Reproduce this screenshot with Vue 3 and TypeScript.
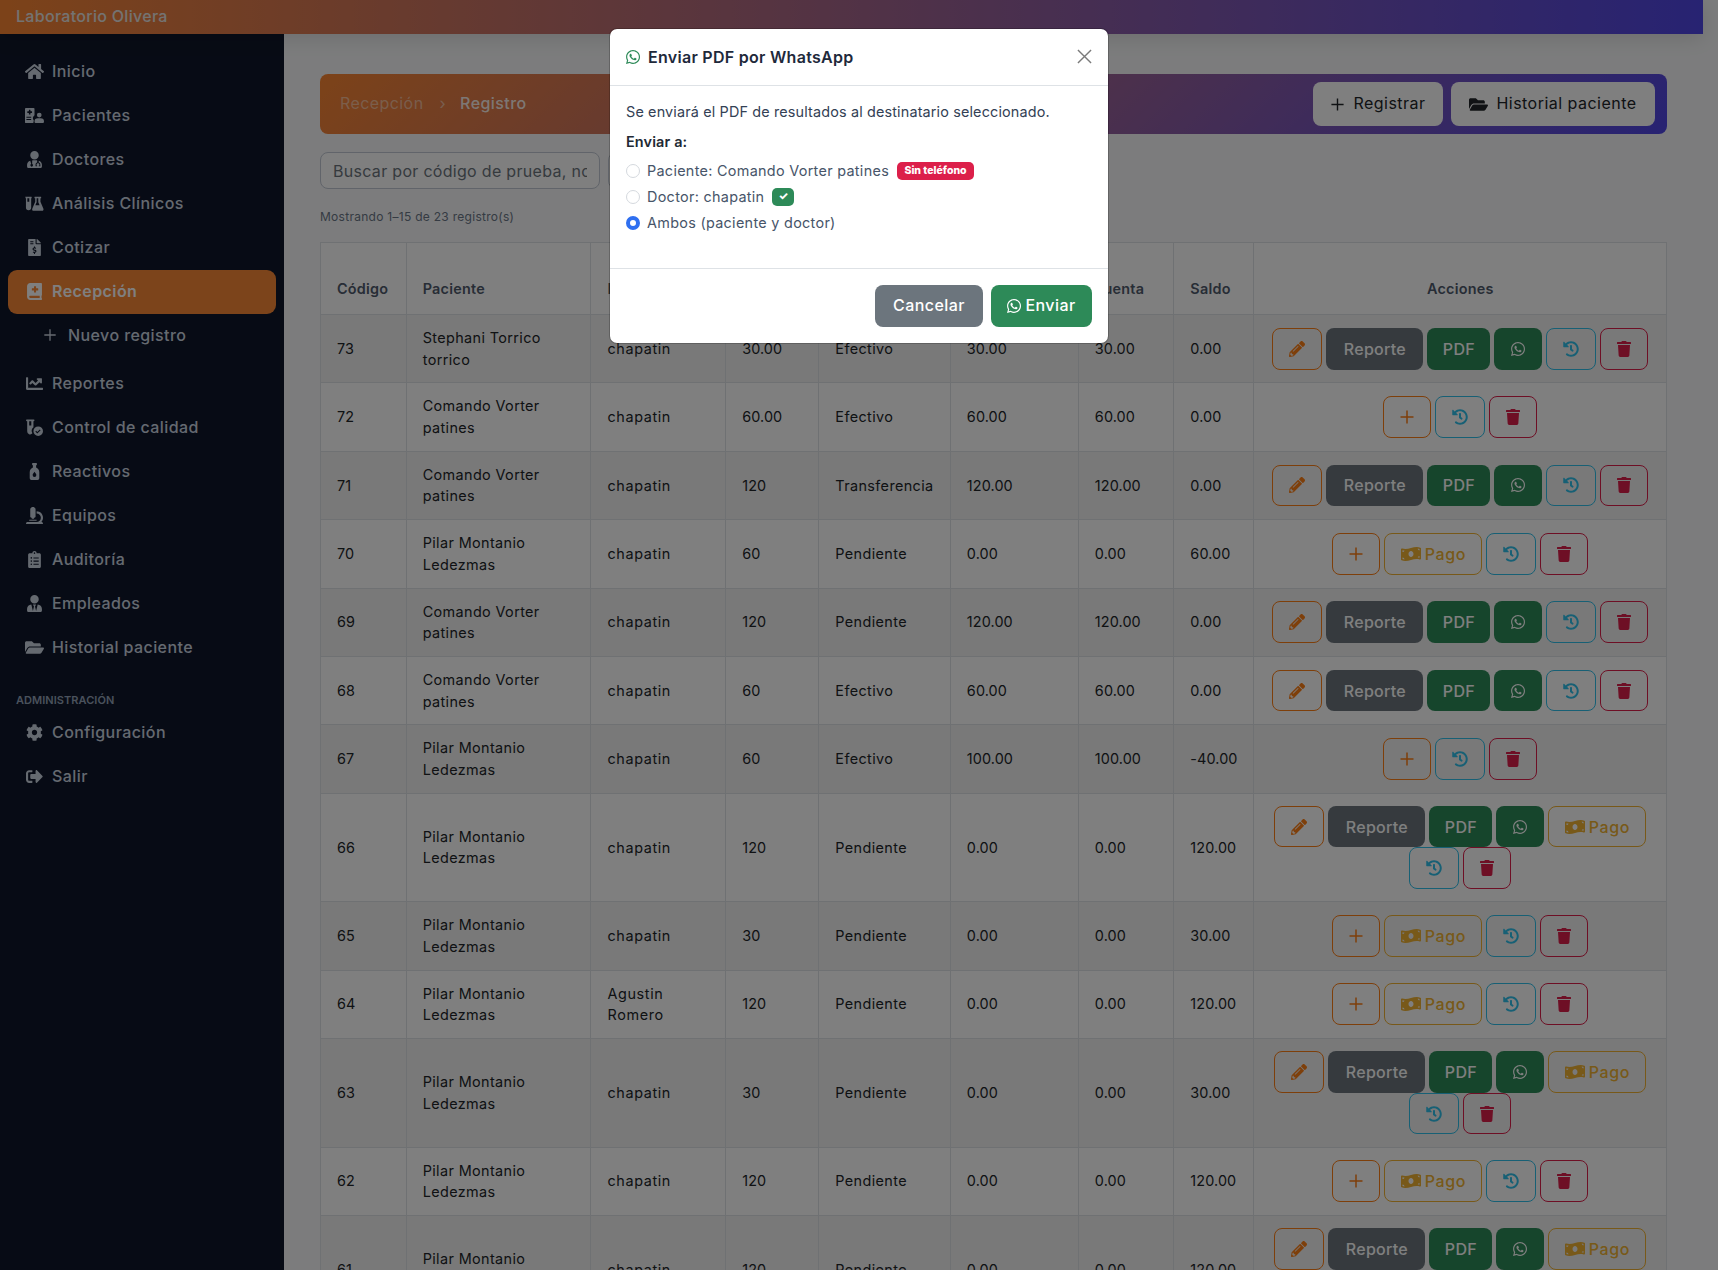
<script setup lang="ts">
interface NavItem { label: string; icon: string; active?: boolean; sub?: boolean; gap?: boolean }
const nav: NavItem[] = [
  { label: 'Inicio', icon: 'home' },
  { label: 'Pacientes', icon: 'hospital' },
  { label: 'Doctores', icon: 'doctor' },
  { label: 'Análisis Clínicos', icon: 'vials' },
  { label: 'Cotizar', icon: 'invoice' },
  { label: 'Recepción', icon: 'book', active: true },
  { label: 'Nuevo registro', icon: 'plus', sub: true },
  { label: 'Reportes', icon: 'chart', gap: true },
  { label: 'Control de calidad', icon: 'vialcheck' },
  { label: 'Reactivos', icon: 'bottle' },
  { label: 'Equipos', icon: 'microscope' },
  { label: 'Auditoría', icon: 'clipboard' },
  { label: 'Empleados', icon: 'tie' },
  { label: 'Historial paciente', icon: 'folder' },
]
const admin: NavItem[] = [
  { label: 'Configuración', icon: 'cog' },
  { label: 'Salir', icon: 'logout' },
]
const icons: Record<string, { vb: string; d: string }> = {
  home: { vb: '0 0 576 512', d: 'M280.37 148.26L96 300.11V464a16 16 0 0 0 16 16l112.06-.29a16 16 0 0 0 15.92-16V368a16 16 0 0 1 16-16h64a16 16 0 0 1 16 16v95.64a16 16 0 0 0 16 16.05L464 480a16 16 0 0 0 16-16V300L295.67 148.26a12.19 12.19 0 0 0-15.3 0zM571.6 251.47L488 182.56V44.05a12 12 0 0 0-12-12h-56a12 12 0 0 0-12 12v72.61L318.47 43a48 48 0 0 0-61 0L4.34 251.47a12 12 0 0 0-1.6 16.9l25.5 31A12 12 0 0 0 45.15 301l235.22-193.74a12.19 12.19 0 0 1 15.3 0L530.9 301a12 12 0 0 0 16.9-1.6l25.5-31a12 12 0 0 0-1.7-16.93z' },
  hospital: { vb: '0 0 640 512', d: 'M32 0h256a32 32 0 0 1 32 32v216a128 128 0 0 0-24 176l-16 88H32a32 32 0 0 1-32-32V32A32 32 0 0 1 32 0zm100 70v46H86a8 8 0 0 0-8 8v36a8 8 0 0 0 8 8h46v46a8 8 0 0 0 8 8h36a8 8 0 0 0 8-8v-46h46a8 8 0 0 0 8-8v-36a8 8 0 0 0-8-8h-46V70a8 8 0 0 0-8-8h-36a8 8 0 0 0-8 8zM48 296v32h160v-32zm0 80v32h160v-32zM480 320a80 80 0 1 0-80-80 80 80 0 0 0 80 80zm48 32h-96a112 112 0 0 0-112 112c0 26 22 48 48 48h224c26 0 48-22 48-48a112 112 0 0 0-112-112z' },
  doctor: { vb: '0 0 448 512', d: 'M224 256c70.7 0 128-57.3 128-128S294.7 0 224 0 96 57.3 96 128s57.3 128 128 128zM96 290C40 305 0 356 0 416v48c0 26.5 21.5 48 48 48h352c26.5 0 48-21.5 48-48v-48c0-60-40-111-96-126v58c32 8 48 38 48 70v30c0 8-6 14-14 14h-30v-28h16v-16c0-26-18-46-44-46s-44 20-44 46v16h16v28h-30c-8 0-14-6-14-14v-30c0-32 16-62 48-70v-64c-10-2-20-2-30-2h-90c-10 0-20 0-30 2v104a40 40 0 1 1-28 0z' },
  vials: { vb: '0 0 640 512', d: 'M8 32h208a8 8 0 0 1 8 8v32a8 8 0 0 1-8 8h-8v312a88 88 0 0 1-176 0V80H24a8 8 0 0 1-8-8V40a8 8 0 0 1-8-8zm72 48v120h64V80zM328 32h208a8 8 0 0 1 8 8v32a8 8 0 0 1-8 8h-16v120l100 230c14 34-8 74-46 74H290c-38 0-60-40-46-74l100-230V80h-16a8 8 0 0 1-8-8V40a8 8 0 0 1 8-8zm64 48v132l-44 100h144l-44-100V80z' },
  invoice: { vb: '0 0 384 512', d: 'M377 105L279.1 7c-4.5-4.5-10.6-7-17-7H256v128h128v-6.1c0-6.3-2.5-12.4-7-16.9zm-153 31V0H24C10.7 0 0 10.7 0 24v464c0 13.3 10.7 24 24 24h336c13.3 0 24-10.7 24-24V160H248c-13.2 0-24-10.8-24-24zM64 72c0-4.42 3.58-8 8-8h80c4.42 0 8 3.58 8 8v16c0 4.42-3.58 8-8 8H72c-4.42 0-8-3.58-8-8V72zm0 80v-16c0-4.42 3.58-8 8-8h80c4.42 0 8 3.58 8 8v16c0 4.42-3.58 8-8 8H72c-4.42 0-8-3.58-8-8zm144 263.88V440c0 4.42-3.58 8-8 8h-16c-4.42 0-8-3.58-8-8v-24.29c-11.29-.58-22.27-4.52-31.37-11.35-3.9-2.93-4.1-8.77-.57-12.14l11.75-11.21c2.77-2.64 6.89-2.76 10.13-.73 3.87 2.42 8.26 3.72 12.82 3.72h28.11c6.5 0 11.8-5.92 11.8-13.19 0-5.95-3.61-11.19-8.77-12.73l-45-13.5c-18.59-5.58-31.58-23.42-31.58-43.39 0-24.52 19.05-44.44 42.67-45.07V232c0-4.42 3.58-8 8-8h16c4.42 0 8 3.58 8 8v24.29c11.29.58 22.27 4.51 31.37 11.35 3.9 2.93 4.1 8.77.57 12.14l-11.75 11.21c-2.77 2.64-6.89 2.76-10.13.73-3.87-2.43-8.26-3.72-12.82-3.72h-28.11c-6.5 0-11.8 5.92-11.8 13.19 0 5.95 3.61 11.19 8.77 12.73l45 13.5c18.59 5.58 31.58 23.42 31.58 43.39 0 24.53-19.05 44.44-42.67 45.07z' },
  book: { vb: '0 0 448 512', d: 'M448 358.4V25.6c0-16-9.6-25.6-25.6-25.6H96C41.6 0 0 41.6 0 96v320c0 54.4 41.6 96 96 96h326.4c12.8 0 25.6-9.6 25.6-25.6v-16q0-9.6-9.6-19.2c-3.2-16-3.2-60.8 0-73.6q9.6-4.8 9.6-19.2zM144 168a8 8 0 0 1 8-8h56v-56a8 8 0 0 1 8-8h48a8 8 0 0 1 8 8v56h56a8 8 0 0 1 8 8v48a8 8 0 0 1-8 8h-56v56a8 8 0 0 1-8 8h-48a8 8 0 0 1-8-8v-56h-56a8 8 0 0 1-8-8zm236.8 280H96c-19.2 0-32-12.8-32-32s16-32 32-32h284.8z' },
  chart: { vb: '0 0 512 512', d: 'M496 384H64V80c0-8.84-7.16-16-16-16H16C7.16 64 0 71.16 0 80v336c0 17.67 14.33 32 32 32h464c8.84 0 16-7.16 16-16v-32c0-8.84-7.16-16-16-16zM464 96H345.94c-21.38 0-32.09 25.85-16.97 40.97l32.4 32.4L288 242.75l-73.37-73.37c-12.5-12.5-32.76-12.5-45.25 0l-68.69 68.69c-6.25 6.25-6.25 16.38 0 22.63l22.62 22.62c6.25 6.25 16.38 6.25 22.63 0L192 237.25l73.37 73.37c12.5 12.5 32.76 12.5 45.25 0l96-96 32.4 32.4c15.12 15.12 40.97 4.41 40.97-16.97V112c.01-8.84-7.15-16-15.99-16z' },
  vialcheck: { vb: '0 0 512 512', d: 'M24 16h208a16 16 0 0 1 0 48h-8v188a144 144 0 0 0-32 180 88 88 0 0 1-156-60V64h-12a16 16 0 0 1 0-48zM96 64v128h64V64zM368 224a144 144 0 1 1 0 288 144 144 0 0 1 0-288zm-28 214l100-100-24-22-76 76-36-36-22 24z' },
  bottle: { vb: '0 0 320 512', d: 'M104 0h112a16 16 0 0 1 16 16v32a16 16 0 0 1-16 16h-8v72c50 30 96 70 96 140v184a52 52 0 0 1-52 52H68a52 52 0 0 1-52-52V276c0-70 46-110 96-140V64h-8a16 16 0 0 1-16-16V16a16 16 0 0 1 16-16zm56 260c-28 40-56 70-56 104a56 56 0 0 0 112 0c0-34-28-64-56-104z' },
  microscope: { vb: '0 0 512 512', d: 'M160 320h12v16c0 8.84 7.16 16 16 16h40c8.84 0 16-7.16 16-16v-16h12c17.67 0 32-14.33 32-32V64c0-17.67-14.33-32-32-32V16c0-8.84-7.16-16-16-16h-64c-8.84 0-16 7.16-16 16v16c-17.67 0-32 14.33-32 32v224c0 17.67 14.33 32 32 32zm304 128h-1.29C493.24 413.99 512 369.2 512 320c0-105.88-86.12-192-192-192v64c70.58 0 128 57.42 128 128s-57.42 128-128 128H48c-26.51 0-48 21.49-48 48 0 8.84 7.16 16 16 16h480c8.84 0 16-7.16 16-16 0-26.51-21.49-48-48-48zm-360-32h208c4.42 0 8-3.58 8-8v-16c0-4.42-3.58-8-8-8H104c-4.42 0-8 3.58-8 8v16c0 4.42 3.58 8 8 8z' },
  clipboard: { vb: '0 0 384 512', d: 'M336 64h-80c0-35.3-28.7-64-64-64s-64 28.7-64 64H48C21.5 64 0 85.5 0 112v352c0 26.5 21.5 48 48 48h288c26.5 0 48-21.5 48-48V112c0-26.5-21.5-48-48-48zM96 424c-13.3 0-24-10.7-24-24s10.7-24 24-24 24 10.7 24 24-10.7 24-24 24zm0-96c-13.3 0-24-10.7-24-24s10.7-24 24-24 24 10.7 24 24-10.7 24-24 24zm0-96c-13.3 0-24-10.7-24-24s10.7-24 24-24 24 10.7 24 24-10.7 24-24 24zm96-192c13.3 0 24 10.7 24 24s-10.7 24-24 24-24-10.7-24-24 10.7-24 24-24zm128 368c0 4.4-3.6 8-8 8H168c-4.4 0-8-3.6-8-8v-16c0-4.4 3.6-8 8-8h144c4.4 0 8 3.6 8 8v16zm0-96c0 4.4-3.6 8-8 8H168c-4.4 0-8-3.6-8-8v-16c0-4.4 3.6-8 8-8h144c4.4 0 8 3.6 8 8v16zm0-96c0 4.4-3.6 8-8 8H168c-4.4 0-8-3.6-8-8v-16c0-4.4 3.6-8 8-8h144c4.4 0 8 3.6 8 8v16z' },
  tie: { vb: '0 0 448 512', d: 'M224 256c70.7 0 128-57.3 128-128S294.7 0 224 0 96 57.3 96 128s57.3 128 128 128zm95.8 32.6L272 480l-32-136 32-56h-96l32 56-32 136-47.8-191.4C56.9 292 0 350.3 0 422.4V464c0 26.5 21.5 48 48 48h352c26.5 0 48-21.5 48-48v-41.6c0-72.1-56.9-130.4-128.2-133.8z' },
  folder: { vb: '0 0 576 512', d: 'M572.694 292.093L500.27 416.248A63.997 63.997 0 0 1 444.989 448H45.025c-18.523 0-30.064-20.093-20.731-36.093l72.424-124.155A64 64 0 0 1 152 256h399.964c18.523 0 30.064 20.093 20.73 36.093zM152 224h328v-48c0-26.51-21.49-48-48-48H272l-64-64H48C21.49 64 0 85.49 0 112v278.046l69.077-118.418C86.214 242.25 117.989 224 152 224z' },
  cog: { vb: '0 0 512 512', d: 'M487.4 315.7l-42.6-24.6c4.3-23.2 4.3-47 0-70.2l42.6-24.6c4.9-2.8 7.1-8.6 5.5-14-11.1-35.6-30-67.8-54.7-94.6-3.8-4.1-10-5.1-14.8-2.3L380.8 110c-17.9-15.4-38.5-27.3-60.8-35.1V25.8c0-5.6-3.9-10.5-9.4-11.7-36.7-8.2-74.3-7.8-109.2 0-5.5 1.2-9.4 6.1-9.4 11.7V75c-22.2 7.9-42.8 19.8-60.8 35.1L88.7 85.5c-4.9-2.8-11-1.9-14.8 2.3-24.7 26.7-43.6 58.9-54.7 94.6-1.7 5.4.6 11.2 5.5 14L67.3 221c-4.3 23.2-4.3 47 0 70.2l-42.6 24.6c-4.9 2.8-7.1 8.6-5.5 14 11.1 35.6 30 67.8 54.7 94.6 3.8 4.1 10 5.1 14.8 2.3l42.6-24.6c17.9 15.4 38.5 27.3 60.8 35.1v49.2c0 5.6 3.9 10.5 9.4 11.7 36.7 8.2 74.3 7.8 109.2 0 5.5-1.2 9.4-6.1 9.4-11.7v-49.2c22.2-7.9 42.8-19.8 60.8-35.1l42.6 24.6c4.9 2.8 11 1.9 14.8-2.3 24.7-26.7 43.6-58.9 54.7-94.6 1.5-5.5-.7-11.3-5.6-14.1zM256 336c-44.1 0-80-35.9-80-80s35.9-80 80-80 80 35.9 80 80-35.9 80-80 80z' },
  logout: { vb: '0 0 512 512', d: 'M497 273L329 441c-15 15-41 4.5-41-17v-96H152c-13.3 0-24-10.7-24-24v-96c0-13.3 10.7-24 24-24h136V88c0-21.4 25.9-32 41-17l168 168c9.3 9.4 9.3 24.6 0 34zM192 436v-40c0-6.6-5.4-12-12-12H96c-17.7 0-32-14.3-32-32V160c0-17.7 14.3-32 32-32h84c6.6 0 12-5.4 12-12V76c0-6.6-5.4-12-12-12H96c-53 0-96 43-96 96v192c0 53 43 96 96 96h84c6.6 0 12-5.4 12-12z' },
  pencil: { vb: '0 0 512 512', d: 'M497.9 142.1l-46.1 46.1c-4.7 4.7-12.3 4.7-17 0l-111-111c-4.7-4.7-4.7-12.3 0-17l46.1-46.1c18.7-18.7 49.1-18.7 67.9 0l60.1 60.1c18.8 18.7 18.8 49.1 0 67.9zM284.2 99.8L21.6 362.4.4 483.9c-2.9 16.4 11.4 30.6 27.8 27.8l121.5-21.3 262.6-262.6c4.7-4.7 4.7-12.3 0-17l-111-111c-4.8-4.7-12.4-4.7-17.1 0zM124.1 339.9c-5.5-5.5-5.5-14.3 0-19.8l154-154c5.5-5.5 14.3-5.5 19.8 0s5.5 14.3 0 19.8l-154 154c-5.5 5.5-14.3 5.5-19.8 0zM88 424h48v36.3l-64.5 11.3-31.1-31.1L51.7 376H88v48z' },
  trash: { vb: '0 0 448 512', d: 'M432 32H312l-9.4-18.7A24 24 0 0 0 281.1 0H166.8a23.72 23.72 0 0 0-21.4 13.3L136 32H16A16 16 0 0 0 0 48v32a16 16 0 0 0 16 16h416a16 16 0 0 0 16-16V48a16 16 0 0 0-16-16zM53.2 467a48 48 0 0 0 47.9 45h245.8a48 48 0 0 0 47.9-45L416 128H32z' },
  history: { vb: '0 0 512 512', d: 'M504 255.531c.253 136.64-111.18 248.372-247.82 248.468-59.015.042-113.223-20.53-155.822-54.911-11.077-8.94-11.905-25.541-1.839-35.607l11.267-11.267c8.609-8.609 22.353-9.551 31.891-1.984C173.062 425.135 212.781 440 256 440c101.705 0 184-82.311 184-184 0-101.705-82.311-184-184-184-48.814 0-93.149 18.969-126.068 49.932l50.754 50.754c10.08 10.08 2.941 27.314-11.313 27.314H24c-8.837 0-16-7.163-16-16V38.627c0-14.254 17.234-21.393 27.314-11.314l49.372 49.372C129.209 34.136 189.552 8 256 8c136.81 0 247.747 110.78 248 247.531zm-180.912 78.784l9.823-12.63c8.138-10.463 6.253-25.542-4.21-33.679L288 256.349V152c0-13.255-10.745-24-24-24h-16c-13.255 0-24 10.745-24 24v135.651l65.409 50.874c10.463 8.137 25.541 6.253 33.679-4.21z' },
  whatsapp: { vb: '0 0 448 512', d: 'M380.9 97.1C339 55.1 283.2 32 223.9 32c-122.4 0-222 99.6-222 222 0 39.1 10.2 77.3 29.6 111L0 480l117.7-30.9c32.4 17.7 68.9 27 106.1 27h.1c122.3 0 224.1-99.6 224.1-222 0-59.3-25.2-115-67.1-157zm-157 341.6c-33.2 0-65.7-8.9-94-25.7l-6.7-4-69.8 18.3L72 359.2l-4.4-7c-18.5-29.4-28.2-63.3-28.2-98.2 0-101.7 82.8-184.5 184.6-184.5 49.3 0 95.6 19.2 130.4 54.1 34.8 34.9 56.2 81.2 56.1 130.5 0 101.8-84.9 184.6-186.6 184.6zm101.2-138.2c-5.5-2.8-32.8-16.2-37.9-18-5.1-1.9-8.8-2.8-12.5 2.8-3.7 5.6-14.3 18-17.6 21.8-3.2 3.7-6.5 4.2-12 1.4-32.6-16.3-54-29.1-75.5-66-5.7-9.8 5.7-9.1 16.3-30.3 1.8-3.7.9-6.9-.5-9.7-1.4-2.8-12.5-30.1-17.1-41.2-4.5-10.8-9.1-9.3-12.5-9.5-3.2-.2-6.9-.2-10.6-.2-3.7 0-9.7 1.4-14.8 6.9-5.1 5.6-19.4 19-19.4 46.3 0 27.3 19.9 53.7 22.6 57.4 2.8 3.7 39.1 59.7 94.8 83.8 35.2 15.2 49 16.5 66.6 13.9 10.7-1.6 32.8-13.4 37.4-26.4 4.6-13 4.6-24.1 3.2-26.4-1.3-2.5-5-3.9-10.5-6.6z' },
  money: { vb: '0 0 640 512', d: 'M621.16 54.46C582.37 38.19 543.55 32 504.75 32c-123.17-.01-246.33 62.34-369.5 62.34-30.89 0-61.76-3.92-92.65-13.72-3.47-1.1-6.95-1.62-10.35-1.62C15.04 79 0 92.32 0 110.81v317.26c0 12.63 7.23 24.6 18.84 29.46C57.63 473.81 96.45 480 135.25 480c123.17 0 246.34-62.35 369.51-62.35 30.89 0 61.76 3.92 92.65 13.72 3.47 1.1 6.95 1.62 10.35 1.62 17.21 0 32.25-13.32 32.25-31.81V83.93c-.01-12.64-7.24-24.6-18.85-29.47zM48 132.22c20.12 5.04 41.12 7.57 62.72 8.93C104.84 170.54 79 192.69 48 192.69v-60.47zm0 285v-47.78c34.37 0 62.18 27.27 63.71 61.4-22.53-1.81-43.59-6.31-63.71-13.62zM320 352c-44.19 0-80-42.99-80-96 0-53.02 35.82-96 80-96s80 42.98 80 96c0 53.03-35.83 96-80 96zm272 27.78c-17.52-4.39-35.71-6.85-54.32-8.44 5.87-26.08 27.5-45.88 54.32-49.28v57.72zm0-236.11c-30.89-3.91-54.86-29.7-55.81-61.55 19.54 2.17 38.09 6.23 55.81 12.66v48.89z' },
  plus: { vb: '0 0 16 16', d: 'M7.25 1.5h1.5v5.75h5.75v1.5H8.75v5.75h-1.5V8.75H1.5v-1.5h5.75z' },
}

type Btn = 'edit' | 'add' | 'rep' | 'pdf' | 'wa' | 'pago' | 'hist' | 'del'
const full: Btn[] = ['edit', 'rep', 'pdf', 'wa', 'hist', 'del']
const short: Btn[] = ['add', 'hist', 'del']
const pay: Btn[] = ['add', 'pago', 'hist', 'del']
const fullPay: Btn[] = ['edit', 'rep', 'pdf', 'wa', 'pago', 'hist', 'del']
const btnIcon: Partial<Record<Btn, string>> = { edit: 'pencil', add: 'plus', wa: 'whatsapp', pago: 'money', hist: 'history', del: 'trash' }
const btnText: Partial<Record<Btn, string>> = { rep: 'Reporte', pdf: 'PDF', pago: 'Pago' }

const S = 'Stephani Torrico torrico'
const C = 'Comando Vorter patines'
const P = 'Pilar Montanio Ledezmas'
const rows: { c: string; p: string; d: string; t: string; m: string; a: string; b: string; s: string; btns: Btn[] }[] = [
  { c: '73', p: S, d: 'chapatin', t: '30.00', m: 'Efectivo', a: '30.00', b: '30.00', s: '0.00', btns: full },
  { c: '72', p: C, d: 'chapatin', t: '60.00', m: 'Efectivo', a: '60.00', b: '60.00', s: '0.00', btns: short },
  { c: '71', p: C, d: 'chapatin', t: '120', m: 'Transferencia', a: '120.00', b: '120.00', s: '0.00', btns: full },
  { c: '70', p: P, d: 'chapatin', t: '60', m: 'Pendiente', a: '0.00', b: '0.00', s: '60.00', btns: pay },
  { c: '69', p: C, d: 'chapatin', t: '120', m: 'Pendiente', a: '120.00', b: '120.00', s: '0.00', btns: full },
  { c: '68', p: C, d: 'chapatin', t: '60', m: 'Efectivo', a: '60.00', b: '60.00', s: '0.00', btns: full },
  { c: '67', p: P, d: 'chapatin', t: '60', m: 'Efectivo', a: '100.00', b: '100.00', s: '-40.00', btns: short },
  { c: '66', p: P, d: 'chapatin', t: '120', m: 'Pendiente', a: '0.00', b: '0.00', s: '120.00', btns: fullPay },
  { c: '65', p: P, d: 'chapatin', t: '30', m: 'Pendiente', a: '0.00', b: '0.00', s: '30.00', btns: pay },
  { c: '64', p: P, d: 'Agustin Romero', t: '120', m: 'Pendiente', a: '0.00', b: '0.00', s: '120.00', btns: pay },
  { c: '63', p: P, d: 'chapatin', t: '30', m: 'Pendiente', a: '0.00', b: '0.00', s: '30.00', btns: fullPay },
  { c: '62', p: P, d: 'chapatin', t: '120', m: 'Pendiente', a: '0.00', b: '0.00', s: '120.00', btns: pay },
  { c: '61', p: P, d: 'chapatin', t: '120', m: 'Pendiente', a: '0.00', b: '0.00', s: '120.00', btns: fullPay },
]
const heads = ['Código', 'Paciente', 'Doctor', 'Total', 'Pago', 'Abono', 'A cuenta', 'Saldo']
</script>

<template>
  <div class="root">
    <div class="page">
      <header class="topbar">Laboratorio Olivera</header>
      <div class="shell">
        <aside class="side">
          <a v-for="n in nav" :key="n.label" class="nav" :class="{ active: n.active, sub: n.sub, gap: n.gap }">
            <span class="ico"><svg :viewBox="icons[n.icon].vb"><path :d="icons[n.icon].d" fill="currentColor" /></svg></span>
            <span>{{ n.label }}</span>
          </a>
          <div class="section">ADMINISTRACIÓN</div>
          <a v-for="n in admin" :key="n.label" class="nav">
            <span class="ico"><svg :viewBox="icons[n.icon].vb"><path :d="icons[n.icon].d" fill="currentColor" /></svg></span>
            <span>{{ n.label }}</span>
          </a>
        </aside>
        <main class="main">
          <div class="bar">
            <div class="crumbs"><span class="c1">Recepción</span><span class="sep">›</span><span class="c2">Registro</span></div>
            <div class="bar-actions">
              <button class="light w-reg"><svg class="lico" viewBox="0 0 16 16"><path :d="icons.plus.d" fill="currentColor" /></svg><span>Registrar</span></button>
              <button class="light w-his"><svg class="lico folder" :viewBox="icons.folder.vb"><path :d="icons.folder.d" fill="currentColor" /></svg><span>Historial paciente</span></button>
            </div>
          </div>
          <div class="filters">
            <input class="search" placeholder="Buscar por código de prueba, nombre o doctor" />
            <input class="search second" />
          </div>
          <div class="count">Mostrando 1–15 de 23 registro(s)</div>
          <table class="tbl">
            <colgroup>
              <col style="width:85.7px" /><col style="width:184.8px" /><col style="width:134.7px" /><col style="width:93.2px" />
              <col style="width:131.5px" /><col style="width:128px" /><col style="width:95.5px" /><col style="width:80px" /><col style="width:413px" />
            </colgroup>
            <thead>
              <tr>
                <th v-for="h in heads" :key="h">{{ h }}</th>
                <th class="center">Acciones</th>
              </tr>
            </thead>
            <tbody>
              <tr v-for="r in rows" :key="r.c">
                <td class="num">{{ r.c }}</td><td>{{ r.p }}</td><td class="doc">{{ r.d }}</td><td class="num">{{ r.t }}</td><td>{{ r.m }}</td><td class="num">{{ r.a }}</td><td class="num">{{ r.b }}</td><td class="num">{{ r.s }}</td>
                <td>
                  <div class="acts">
                    <button v-for="(b, i) in r.btns" :key="i" class="btn" :class="b">
                      <svg v-if="btnIcon[b]" class="bico" :viewBox="icons[btnIcon[b]!].vb"><path :d="icons[btnIcon[b]!].d" fill="currentColor" /></svg>
                      <span v-if="btnText[b]">{{ btnText[b] }}</span>
                    </button>
                  </div>
                </td>
              </tr>
            </tbody>
          </table>
        </main>
      </div>
    </div>

    <div class="backdrop"></div>
    <div class="modal" role="dialog">
      <div class="m-head">
        <svg class="m-wa" :viewBox="icons.whatsapp.vb"><path :d="icons.whatsapp.d" fill="currentColor" /></svg>
        <h5>Enviar PDF por WhatsApp</h5>
        <svg class="m-x" viewBox="0 0 16 16"><path d="M1 1l14 14M15 1L1 15" stroke="currentColor" stroke-width="1.5" fill="none" /></svg>
      </div>
      <div class="m-body">
        <p class="m-p">Se enviará el PDF de resultados al destinatario seleccionado.</p>
        <div class="m-l">Enviar a:</div>
        <label class="radio"><input type="radio" name="dest" /><span>Paciente: Comando Vorter patines</span><em class="tag red">Sin teléfono</em></label>
        <label class="radio"><input type="radio" name="dest" /><span>Doctor: chapatin</span><em class="tag green">✓</em></label>
        <label class="radio"><input type="radio" name="dest" checked /><span>Ambos (paciente y doctor)</span></label>
      </div>
      <div class="m-foot">
        <button class="mb cancel"><span>Cancelar</span></button>
        <button class="mb send"><svg class="send-ico" :viewBox="icons.whatsapp.vb"><path :d="icons.whatsapp.d" fill="currentColor" /></svg><span>Enviar</span></button>
      </div>
    </div>
  </div>
</template>

<style>
html, body { margin: 0; background: #f8f9fa; }
</style>

<style scoped>
* { box-sizing: border-box; }
.root {
  position: relative; width: 1718px; height: 1270px; overflow: hidden;
  font-family: Inter, "Noto Sans", sans-serif; background: #f8f9fa;
}
.page { width: 1703px; height: 1270px; display: flex; flex-direction: column; }
.topbar {
  height: 34px; flex: none; display: flex; align-items: center; padding: 0 0 2px 16px;
  font-size: 16px; font-weight: 500; letter-spacing: .3px; color: #e9e6e3;
  background: linear-gradient(90deg, #f98532 0%, #4f46e5 100%);
  box-shadow: 0 4px 20px rgba(0, 0, 0, .12); position: relative; z-index: 2;
}
.shell { flex: 1; display: flex; min-height: 0; }
.side { width: 284px; flex: none; background: #0f172a; padding: 16px 8px 0; }
.nav {
  height: 44px; display: flex; align-items: center; padding-left: 14px; padding-bottom: 2px; border-radius: 9px;
  color: #cbd5e1; font-size: 16px; font-weight: 500; letter-spacing: .42px;
}
.nav.active { background: #f98836; color: #fff; font-weight: 600; }
.nav.sub { padding-left: 30px; }
.nav.sub .ico svg { height: 14px; width: 14px; }
.nav.gap { margin-top: 4px; }
.ico { width: 24px; height: 18px; margin-right: 6px; display: flex; justify-content: center; align-items: center; flex: none; }
.ico svg { width: 19px; height: 17px; display: block; }
.section {
  height: 41.4px; padding: 23px 8px 0; font-size: 11px; font-weight: 600; color: #94a3b8; letter-spacing: .05px; line-height: 14px;
}
.main { flex: 1; min-width: 0; padding: 40px 36px 0; overflow: hidden; }
.bar {
  height: 60px; border-radius: 8px; display: flex; align-items: center; justify-content: space-between; padding: 0 12px 0 20px;
  background: linear-gradient(135deg, #f98532 0%, #4f46e5 100%);
}
.crumbs { display: flex; align-items: center; font-size: 16px; letter-spacing: .42px; padding-bottom: 2px; }
.c1 { color: rgba(255, 255, 255, .48); }
.sep { color: rgba(255, 255, 255, .5); margin: 0 14px 0 16px; }
.c2 { color: rgba(255, 255, 255, .9); font-weight: 500; }
.bar-actions { display: flex; gap: 8px; }
.light {
  height: 44px; border: 0; border-radius: 8px; background: #fff; color: #212529; font-size: 16px; letter-spacing: .48px;
  display: flex; align-items: center; justify-content: center; gap: 8px; font-family: Inter, sans-serif;
}
.light span { position: relative; top: -1px; }
.w-reg { width: 130px; }
.w-his { width: 204px; }
.lico { width: 15px; height: 15px; }
.lico.folder { width: 19px; height: 17px; }
.filters { display: flex; gap: 8px; margin-top: 18px; }
.search {
  width: 280px; height: 37px; flex: none; border: 1px solid #c2c8d4; border-radius: 8px; background: #fff; padding: 0 12px;
  font-family: Inter, sans-serif; font-size: 16px; letter-spacing: .3px; color: #212529; outline: none;
}
.search::placeholder { color: #6c757d; opacity: 1; }
.search.second { width: 400px; }
.count { margin-top: 19px; height: 18px; line-height: 18px; font-size: 12px; color: #6b7687; letter-spacing: .28px; }
.tbl { margin-top: 16px; width: 1347px; table-layout: fixed; border-collapse: collapse; background: #fff; font-size: 14.4px; letter-spacing: .38px; line-height: 21.6px; }
.tbl th, .tbl td { border: 1px solid #dee2e6; padding: 12.1px 16px; text-align: left; vertical-align: middle; color: #212529; }
.tbl th { height: 72px; vertical-align: bottom; padding-bottom: 14px; font-weight: 600; color: #4f5a6c; letter-spacing: .25px; }
.tbl th.center { text-align: center; }
.tbl td { font-weight: 400; }
.tbl td.num { letter-spacing: .1px; }
.tbl td.doc { letter-spacing: .62px; }
.tbl td:last-child { padding: 12.1px 4px; }
.tbl tbody tr:nth-child(odd) td { background: #f2f2f2; }
.acts { display: flex; flex-wrap: wrap; justify-content: center; column-gap: 4px; row-gap: 0; max-width: 400px; margin: 0 auto; }
.btn {
  height: 41.7px; border-radius: 8px; border: 1px solid transparent; background: #fff0; display: inline-flex; align-items: center; justify-content: center;
  font-family: Inter, sans-serif; font-size: 16px; font-weight: 500; letter-spacing: .25px; padding: 0; flex: none; gap: 5px;
}
.bico { width: 18px; height: 16px; display: block; }
.edit { width: 50px; border-color: #fd7e14; color: #fd7e14; }
.add { width: 48px; border-color: #fd7e14; color: #fd7e14; }
.add .bico { width: 16px; height: 16px; }
.rep { width: 97px; background: #6c757d; color: #fff; }
.pdf { width: 63px; background: #2d8a58; color: #fff; }
.wa { width: 48px; background: #2d8a58; color: #fff; }
.pago { width: 98px; border-color: #f0b232; color: #f0b232; letter-spacing: .6px; gap: 4px; }
.pago .bico { width: 20px; }
.hist { width: 50px; border-color: #2fc0ea; color: #2fc0ea; }
.del { width: 48px; border-color: #dc1f4a; color: #dc1f4a; }
.backdrop { position: absolute; inset: 0; background: rgba(0, 0, 0, .5); z-index: 10; }
.modal {
  position: absolute; z-index: 11; left: 609px; top: 28px; width: 500px; background: #fff; background-clip: padding-box;
  border: 1px solid rgba(0, 0, 0, .2); border-radius: 8px; color: #334155;
}
.m-head { height: 57px; display: flex; align-items: center; padding: 0 16px 1px; border-bottom: 1px solid #dee2e6; }
.m-wa { width: 14px; height: 16px; color: #2d8a58; flex: none; }
.m-head h5 { margin: 0 0 0 8px; font-size: 16px; line-height: 24px; font-weight: 600; color: #1e293b; letter-spacing: .28px; flex: 1; }
.m-x { width: 15px; height: 15px; color: #7a7a7a; }
.m-body { height: 183px; padding: 15px 16px; font-size: 14.4px; line-height: 21.6px; letter-spacing: .15px; border-bottom: 1px solid #dee2e6; }
.m-p { margin: 0 0 8px; }
.m-l { font-weight: 600; color: #212933; margin-bottom: 6px; }
.radio { display: flex; align-items: center; height: 26px; color: #475569; letter-spacing: .3px; }
.radio input { appearance: none; margin: 0 7px 0 0; width: 14px; height: 14px; border-radius: 50%; border: 1px solid #d5d9de; background: #fff; flex: none; }
.radio input:checked { border: 4px solid #2f6ff0; }
.tag { margin-left: 8px; height: 18px; border-radius: 5px; display: inline-flex; align-items: center; justify-content: center; font-style: normal; color: #fff; font-weight: 800; font-size: 10.5px; letter-spacing: 0; }
.tag.red { background: #dc1f4a; width: 77px; }
.tag.green { background: #2d8a58; width: 22px; font-size: 11px; }
.m-foot { height: 74px; display: flex; justify-content: flex-end; align-items: flex-start; gap: 8px; padding: 16px 16px 0; }
.mb {
  height: 42px; border: 0; border-radius: 8px; color: #fff; font-family: Inter, sans-serif; font-size: 16px; font-weight: 500; letter-spacing: .45px;
  display: flex; align-items: center; justify-content: center; gap: 4px;
}
.mb span { position: relative; top: -1px; }
.cancel { width: 108px; background: #6c757d; }
.send { width: 101px; background: #2d8a58; }
.send-ico { width: 14px; height: 16px; }
</style>
